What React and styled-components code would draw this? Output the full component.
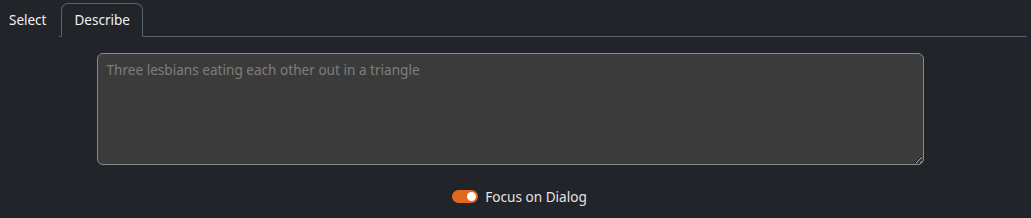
import React, { useState } from "react";
import styled, { createGlobalStyle } from "styled-components";

const GlobalStyle = createGlobalStyle`
  html, body {
    margin: 0;
    background: #212529;
  }
  body {
    font-family: "Noto Sans", "Open Sans", sans-serif;
    color: #e8e8e8;
  }
`;

const Page = styled.div`
  width: 1031px;
  height: 218px;
  box-sizing: border-box;
  padding: 3px 4px 0 0;
  background: #212529;
`;

const TabBar = styled.div`
  display: flex;
  align-items: flex-end;
  height: 33px;
  border-bottom: 1px solid #5b616a;
`;

const Tab = styled.button`
  height: 34px;
  margin-bottom: -1px;
  box-sizing: border-box;
  padding: 0 12px 1px;
  margin-left: ${(p) => (p.first ? "-4px" : "0")};
  margin-right: 2px;
  background: #212529;
  border: 1px solid ${(p) => (p.active ? "#5b616a" : "transparent")};
  border-bottom-color: ${(p) => (p.active ? "#212529" : "transparent")};
  border-radius: 7px 7px 0 0;
  color: #f2f2f2;
  font-family: inherit;
  font-size: 13.5px;
  cursor: pointer;
`;

const Body = styled.div`
  display: flex;
  flex-direction: column;
  align-items: center;
  padding: 16px 7px 0 0;
`;

const Prompt = styled.textarea`
  width: 827px;
  height: 112px;
  box-sizing: border-box;
  padding: 6px 9px;
  background: #3b3b3b;
  border: 1px solid #8a8a8a;
  border-radius: 6px;
  color: #eee;
  font-family: inherit;
  font-size: 13.6px;
  outline: none;
  resize: vertical;
  &::placeholder {
    color: #7e7e7e;
  }
`;

const ToggleRow = styled.label`
  display: flex;
  align-items: center;
  gap: 7px;
  margin: 22px 0 0 19px;
  font-size: 13.6px;
  color: #e4e4e4;
  cursor: pointer;
`;

const Track = styled.span`
  position: relative;
  width: 26px;
  height: 13px;
  border-radius: 7px;
  background: ${(p) => (p.on ? "#e0691f" : "#555")};
`;

const Knob = styled.span`
  position: absolute;
  top: 2px;
  left: ${(p) => (p.on ? "15px" : "2px")};
  width: 9px;
  height: 9px;
  border-radius: 50%;
  background: #fff;
`;

export default function App() {
  const [tab, setTab] = useState("describe");
  const [focus, setFocus] = useState(true);
  return (
    <Page>
      <GlobalStyle />
      <TabBar>
        <Tab first active={tab === "select"} onClick={() => setTab("select")}>
          Select
        </Tab>
        <Tab active={tab === "describe"} onClick={() => setTab("describe")}>
          Describe
        </Tab>
      </TabBar>
      <Body>
        <Prompt placeholder="Three lesbians eating each other out in a triangle" />
        <ToggleRow onClick={() => setFocus(!focus)}>
          <Track on={focus}>
            <Knob on={focus} />
          </Track>
          Focus on Dialog
        </ToggleRow>
      </Body>
    </Page>
  );
}
